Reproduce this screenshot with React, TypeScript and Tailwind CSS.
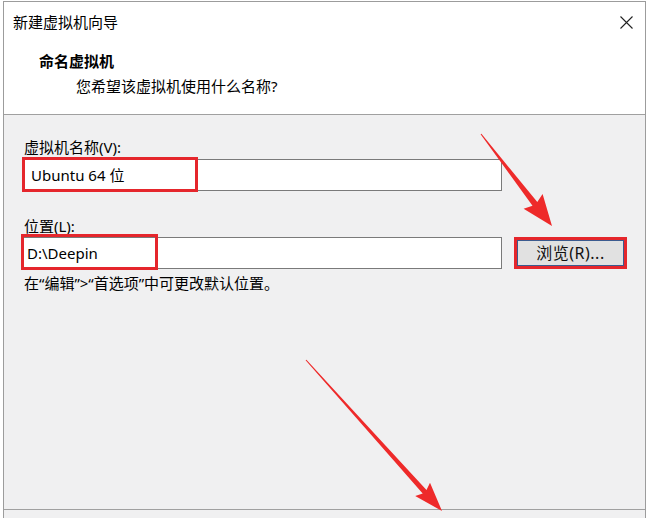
import React from "react";

function arrowPoints(
  x1: number, y1: number, x2: number, y2: number,
  headLen: number, headHalf: number, s0: number, s1: number
): string {
  const dx = x2 - x1;
  const dy = y2 - y1;
  const len = Math.hypot(dx, dy);
  const ux = dx / len;
  const uy = dy / len;
  const nx = -uy;
  const ny = ux;
  const bx = x2 - ux * headLen;
  const by = y2 - uy * headLen;
  const pts: [number, number][] = [
    [x1 + nx * s0 / 2, y1 + ny * s0 / 2],
    [bx + nx * s1 / 2, by + ny * s1 / 2],
    [bx + nx * headHalf - ux * 3, by + ny * headHalf - uy * 3],
    [x2, y2],
    [bx - nx * headHalf - ux * 3, by - ny * headHalf - uy * 3],
    [bx - nx * s1 / 2, by - ny * s1 / 2],
    [x1 - nx * s0 / 2, y1 - ny * s0 / 2],
  ];
  return pts.map((p) => `${p[0].toFixed(1)},${p[1].toFixed(1)}`).join(" ");
}

const font = { fontFamily: '"Noto Sans", "Noto Sans CJK SC", sans-serif' };

export default function App() {
  return (
    <div
      className="relative w-[650px] h-[518px] bg-white overflow-hidden text-black"
      style={font}
    >
      <div className="ml-[3px] mt-px w-[643px] h-[517px] border border-b-0 border-[#9c9c9c] flex flex-col">
        {/* header */}
        <div className="h-[113px] bg-white border-b border-[#a0a0a0] flex flex-col">
          <div className="h-[40px] flex items-center justify-between pl-[9px] pr-[12px]">
            <span className="text-[15px] leading-[20px]">新建虚拟机向导</span>
            <svg width="13" height="13" viewBox="0 0 13 13">
              <path d="M0.5 0.5 L12.5 12.5 M12.5 0.5 L0.5 12.5" stroke="#222" strokeWidth="1.1" fill="none" />
            </svg>
          </div>
          <div className="pl-[35px] mt-[9px] text-[15px] leading-[20px] font-bold">命名虚拟机</div>
          <div className="pl-[72px] mt-[5px] text-[15px] leading-[20px]">您希望该虚拟机使用什么名称?</div>
        </div>

        {/* body */}
        <div className="h-[395px] bg-[#f0f0f1] border-b border-[#a0a0a0] pl-[18px] pt-[22px] flex flex-col">
          <div className="pl-[2px] text-[15px] leading-[20px]">虚拟机名称(V):</div>
          <div className="relative mt-[2px] w-[480px] h-[32px] bg-white border border-[#7a7a7a] flex items-center pl-[8px] text-[15px]">
            Ubuntu 64 位
            <div className="absolute left-[-1px] top-[-3px] w-[176px] h-[35px] border-[3px] border-[#e5262c]" />
          </div>

          <div className="pl-[2px] mt-[25px] text-[15px] leading-[20px]">位置(L):</div>
          <div className="mt-px flex items-center gap-[12px]">
            <div className="relative w-[480px] h-[32px] bg-white border border-[#7a7a7a] flex items-center pl-[4px] text-[15px]">
              D:\Deepin
              <div className="absolute left-[-2px] top-[-4px] w-[137px] h-[36px] border-[3px] border-[#e5262c]" />
            </div>
            <div className="w-[113px] h-[32px] border-[3px] border-[#e5262c] -mt-[1px]">
              <div className="w-full h-full bg-[#e1e1e1] border border-[#3b5b8f] flex items-center justify-center text-[16px] leading-[20px] tracking-[0.5px] text-[#111]">
                浏览(R)...
              </div>
            </div>
          </div>

          <div className="pl-[2px] mt-[4px] text-[15px] leading-[20px]">在“编辑”&gt;“首选项”中可更改默认位置。</div>
        </div>

        {/* footer */}
        <div className="flex-1 bg-[#f0f0f1]" />
      </div>

      {/* annotation arrows */}
      <svg className="absolute left-0 top-0 pointer-events-none" width="650" height="518" viewBox="0 0 650 518">
        <polygon points={arrowPoints(481, 134, 552, 226, 28, 12, 1, 6)} fill="#ee2a2a" />
        <polygon points={arrowPoints(306, 360, 442, 511, 26, 10, 1, 5)} fill="#ee2a2a" />
      </svg>
    </div>
  );
}
